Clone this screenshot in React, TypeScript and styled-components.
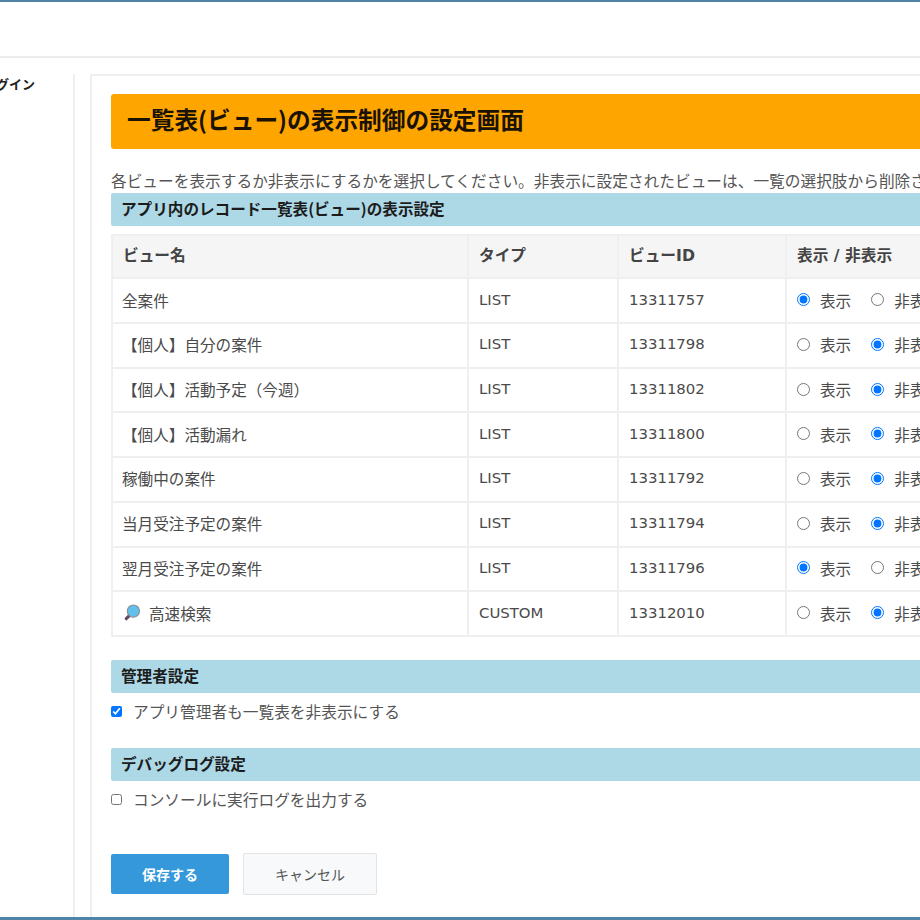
import React from 'react';
import styled, { createGlobalStyle } from 'styled-components';

interface ViewRow {
  name: string;
  type: string;
  id: string;
  visible: boolean;
  icon?: boolean;
}

const views: ViewRow[] = [
  { name: '全案件', type: 'LIST', id: '13311757', visible: true },
  { name: '【個人】自分の案件', type: 'LIST', id: '13311798', visible: false },
  { name: '【個人】活動予定（今週）', type: 'LIST', id: '13311802', visible: false },
  { name: '【個人】活動漏れ', type: 'LIST', id: '13311800', visible: false },
  { name: '稼働中の案件', type: 'LIST', id: '13311792', visible: false },
  { name: '当月受注予定の案件', type: 'LIST', id: '13311794', visible: false },
  { name: '翌月受注予定の案件', type: 'LIST', id: '13311796', visible: true },
  { name: '高速検索', type: 'CUSTOM', id: '13312010', visible: false, icon: true },
];

const GlobalStyle = createGlobalStyle`
  html, body {
    margin: 0;
    padding: 0;
    background: #fff;
    overflow: hidden;
  }
  body {
    font-family: "Noto Sans CJK JP", "Noto Sans", sans-serif;
    color: #333;
  }
`;

const Frame = styled.div`
  width: 920px;
  height: 920px;
  box-sizing: border-box;
  border-top: 2px solid #4f84a6;
  border-bottom: 3px solid #4f84a6;
  overflow: hidden;
  display: flex;
  flex-direction: column;
`;

const Header = styled.header`
  flex: none;
  height: 54px;
  border-bottom: 2px solid #ececec;
`;

const Body = styled.div`
  flex: 1;
  display: flex;
  width: 1200px;
  min-height: 0;
  padding-top: 16px;
`;

const Sidebar = styled.nav`
  flex: none;
  width: 73px;
  border-right: 2px solid #efefef;
  overflow: hidden;
`;

const SideItem = styled.div`
  margin-left: -30px;
  font-size: 13px;
  font-weight: 700;
  line-height: 19px;
  color: #222;
  white-space: nowrap;
`;

const Panel = styled.main`
  flex: none;
  width: 1100px;
  margin-left: 15px;
  box-sizing: border-box;
  border-left: 2px solid #efefef;
  border-top: 2px solid #efefef;
  padding: 18px 20px 0 19px;
`;

const Title = styled.h1`
  margin: 0;
  height: 55px;
  box-sizing: border-box;
  padding: 0 0 6px 16px;
  display: flex;
  align-items: center;
  background: #ffa500;
  border-radius: 3px;
  font-size: 23.7px;
  font-weight: 700;
  color: #1a1204;
`;

const Lead = styled.p`
  margin: 20px 0 0;
  font-size: 15.7px;
  line-height: 24px;
  color: #555;
  white-space: nowrap;
`;

const SectionBar = styled.h2<{ $gap?: number }>`
  margin: ${(p) => p.$gap ?? 0}px 0 0;
  height: 33px;
  box-sizing: border-box;
  padding: 0 0 3px 10px;
  display: flex;
  align-items: center;
  background: #add8e6;
  border-radius: 2px;
  font-size: 15.6px;
  font-weight: 700;
  color: #1c1c1c;
`;

const Table = styled.table`
  margin-top: 8px;
  border-collapse: collapse;
  table-layout: fixed;
  width: 960px;
  border: 2px solid #efefef;
  font-size: 15.6px;
`;

const HeadCell = styled.th<{ $width: number }>`
  width: ${(p) => p.$width}px;
  height: 43.4px;
  padding: 0 10px 5px;
  box-sizing: border-box;
  background: #f5f5f5;
  border: 2px solid #efefef;
  text-align: left;
  font-family: "DejaVu Sans", "Noto Sans CJK JP", sans-serif;
  font-size: 15.7px;
  font-weight: 700;
  color: #444;
`;

const Cell = styled.td`
  height: 44.7px;
  padding: 0 10px 2px;
  box-sizing: border-box;
  border: 2px solid #efefef;
  color: #4a4a4a;
  white-space: nowrap;
`;

const LatinCell = styled(Cell)`
  font-family: "DejaVu Sans", sans-serif;
  font-size: 14.9px;
`;

const NameWrap = styled.div`
  display: flex;
  align-items: center;
  gap: 8px;
  margin-left: -1px;
`;

const RadioGroup = styled.div`
  display: flex;
  align-items: center;
  gap: 20px;
`;

const RadioLabel = styled.label`
  display: inline-flex;
  align-items: center;
  gap: 10px;
  color: #4a4a4a;
`;

const Radio = styled.input`
  margin: 0;
  width: 13px;
  height: 13px;
`;

const CheckRow = styled.label`
  margin-top: 8px;
  display: flex;
  align-items: center;
  gap: 11px;
  font-size: 15.7px;
  line-height: 22px;
  color: #555;
`;

const Check = styled.input`
  margin: 0;
  width: 11px;
  height: 11px;
`;

const Actions = styled.div`
  margin-top: 43px;
  display: flex;
  align-items: flex-start;
  gap: 14px;
`;

const SaveButton = styled.button`
  width: 118px;
  height: 40px;
  border: none;
  border-radius: 2px;
  background: #3498db;
  color: #fff;
  font-family: inherit;
  font-size: 14px;
  font-weight: 700;
`;

const CancelButton = styled.button`
  width: 134px;
  height: 42px;
  margin-top: -1px;
  border: 1px solid #e3e3e3;
  border-radius: 2px;
  background: #f7f9fa;
  color: #555;
  font-family: inherit;
  font-size: 14px;
`;

const SearchIcon = () => (
  <svg width="19" height="19" viewBox="0 0 20 20" aria-hidden="true">
    <line x1="8" y1="13" x2="4.5" y2="16.5" stroke="#6b4a63" strokeWidth="3.4" strokeLinecap="round" />
    <circle cx="12" cy="8.5" r="6.4" fill="#62c1ec" stroke="#8a8f96" strokeWidth="1.2" />
  </svg>
);

const App: React.FC = () => (
  <>
    <GlobalStyle />
    <Frame>
      <Header />
      <Body>
        <Sidebar>
          <SideItem>プラグイン</SideItem>
        </Sidebar>
        <Panel>
          <Title>一覧表(ビュー)の表示制御の設定画面</Title>
          <Lead>各ビューを表示するか非表示にするかを選択してください。非表示に設定されたビューは、一覧の選択肢から削除されます。</Lead>
          <SectionBar>アプリ内のレコード一覧表(ビュー)の表示設定</SectionBar>
          <Table>
            <thead>
              <tr>
                <HeadCell $width={356}>ビュー名</HeadCell>
                <HeadCell $width={150}>タイプ</HeadCell>
                <HeadCell $width={168}>ビューID</HeadCell>
                <HeadCell $width={286}>表示 / 非表示</HeadCell>
              </tr>
            </thead>
            <tbody>
              {views.map((view) => (
                <tr key={view.id}>
                  <Cell>
                    <NameWrap>
                      {view.icon && <SearchIcon />}
                      {view.name}
                    </NameWrap>
                  </Cell>
                  <LatinCell>{view.type}</LatinCell>
                  <LatinCell>{view.id}</LatinCell>
                  <Cell>
                    <RadioGroup>
                      <RadioLabel>
                        <Radio type="radio" name={`view-${view.id}`} defaultChecked={view.visible} />
                        表示
                      </RadioLabel>
                      <RadioLabel>
                        <Radio type="radio" name={`view-${view.id}`} defaultChecked={!view.visible} />
                        非表示
                      </RadioLabel>
                    </RadioGroup>
                  </Cell>
                </tr>
              ))}
            </tbody>
          </Table>
          <SectionBar $gap={23}>管理者設定</SectionBar>
          <CheckRow>
            <Check type="checkbox" defaultChecked />
            アプリ管理者も一覧表を非表示にする
          </CheckRow>
          <SectionBar $gap={25}>デバッグログ設定</SectionBar>
          <CheckRow>
            <Check type="checkbox" />
            コンソールに実行ログを出力する
          </CheckRow>
          <Actions>
            <SaveButton>保存する</SaveButton>
            <CancelButton>キャンセル</CancelButton>
          </Actions>
        </Panel>
      </Body>
    </Frame>
  </>
);

export default App;
